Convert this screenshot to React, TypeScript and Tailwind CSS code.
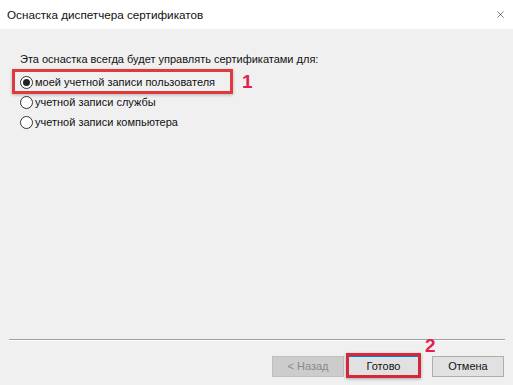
import { X } from "lucide-react";

const font = { fontFamily: '"Liberation Sans", Arial, sans-serif' };

function Radio({ checked, label }: { checked?: boolean; label: string }) {
  return (
    <div className="flex items-center h-[20px]">
      <span className="w-[13px] h-[13px] rounded-full border border-[#333] bg-white flex items-center justify-center">
        {checked && <span className="w-[7px] h-[7px] rounded-full bg-[#222]" />}
      </span>
      <span className="ml-[2px] text-[11px] text-[#111]">{label}</span>
    </div>
  );
}

export default function App() {
  return (
    <div className="w-[513px] h-[385px] bg-[#f0f0f0] flex flex-col" style={font}>
      {/* Title bar */}
      <div className="h-[29px] bg-white flex items-center justify-between pl-[7px] pr-[7px]">
        <span className="text-[11.7px] text-[#111]">Оснастка диспетчера сертификатов</span>
        <X size={11} strokeWidth={1.3} className="text-[#222]" />
      </div>

      {/* Body */}
      <div className="flex-1 pl-[20px] pt-[23px]">
        <div className="text-[11px] text-[#111] leading-[14px]">
          Эта оснастка всегда будет управлять сертификатами для:
        </div>
        <div className="mt-[6px] flex flex-col">
          <div className="relative">
            <Radio checked label="моей учетной записи пользователя" />
            <div className="absolute left-[-8px] top-[-3px] w-[221px] h-[25px] border-[3px] border-[#e0393e] shadow-[0_1px_3px_rgba(0,0,0,0.25)]" />
            <span className="absolute left-[222px] top-[-1px] text-[19px] leading-[22px] font-bold text-[#e51f4c]">1</span>
          </div>
          <Radio label="учетной записи службы" />
          <Radio label="учетной записи компьютера" />
        </div>
      </div>

      {/* Separator */}
      <div className="ml-[9px] mr-[8px] border-t border-[#a0a0a0] border-b border-b-white" />

      {/* Buttons */}
      <div className="h-[44px] flex justify-end items-start pt-[15px] pr-[9px]">
        <button className="w-[72px] h-[21px] bg-[#cccccc] border border-[#bfbfbf] text-[11px] text-[#8a8a8a]">
          &lt; Назад
        </button>
        <div className="relative flex ml-[4px]">
          <button className="w-[71px] h-[21px] bg-[#e1e1e1] border border-[#0078d7] text-[11px] text-[#111]">
            Готово
          </button>
          <div className="absolute left-[-2px] top-[-3px] w-[75px] h-[25px] border-[3px] border-[#d5283a] shadow-[0_1px_3px_rgba(0,0,0,0.3)]" />
          <span className="absolute left-[77px] top-[-18px] text-[19px] leading-[16px] font-bold text-[#e51f4c]">2</span>
        </div>
        <button className="ml-[13px] w-[72px] h-[21px] bg-[#e1e1e1] border border-[#adadad] text-[11px] text-[#111]">
          Отмена
        </button>
      </div>
    </div>
  );
}
